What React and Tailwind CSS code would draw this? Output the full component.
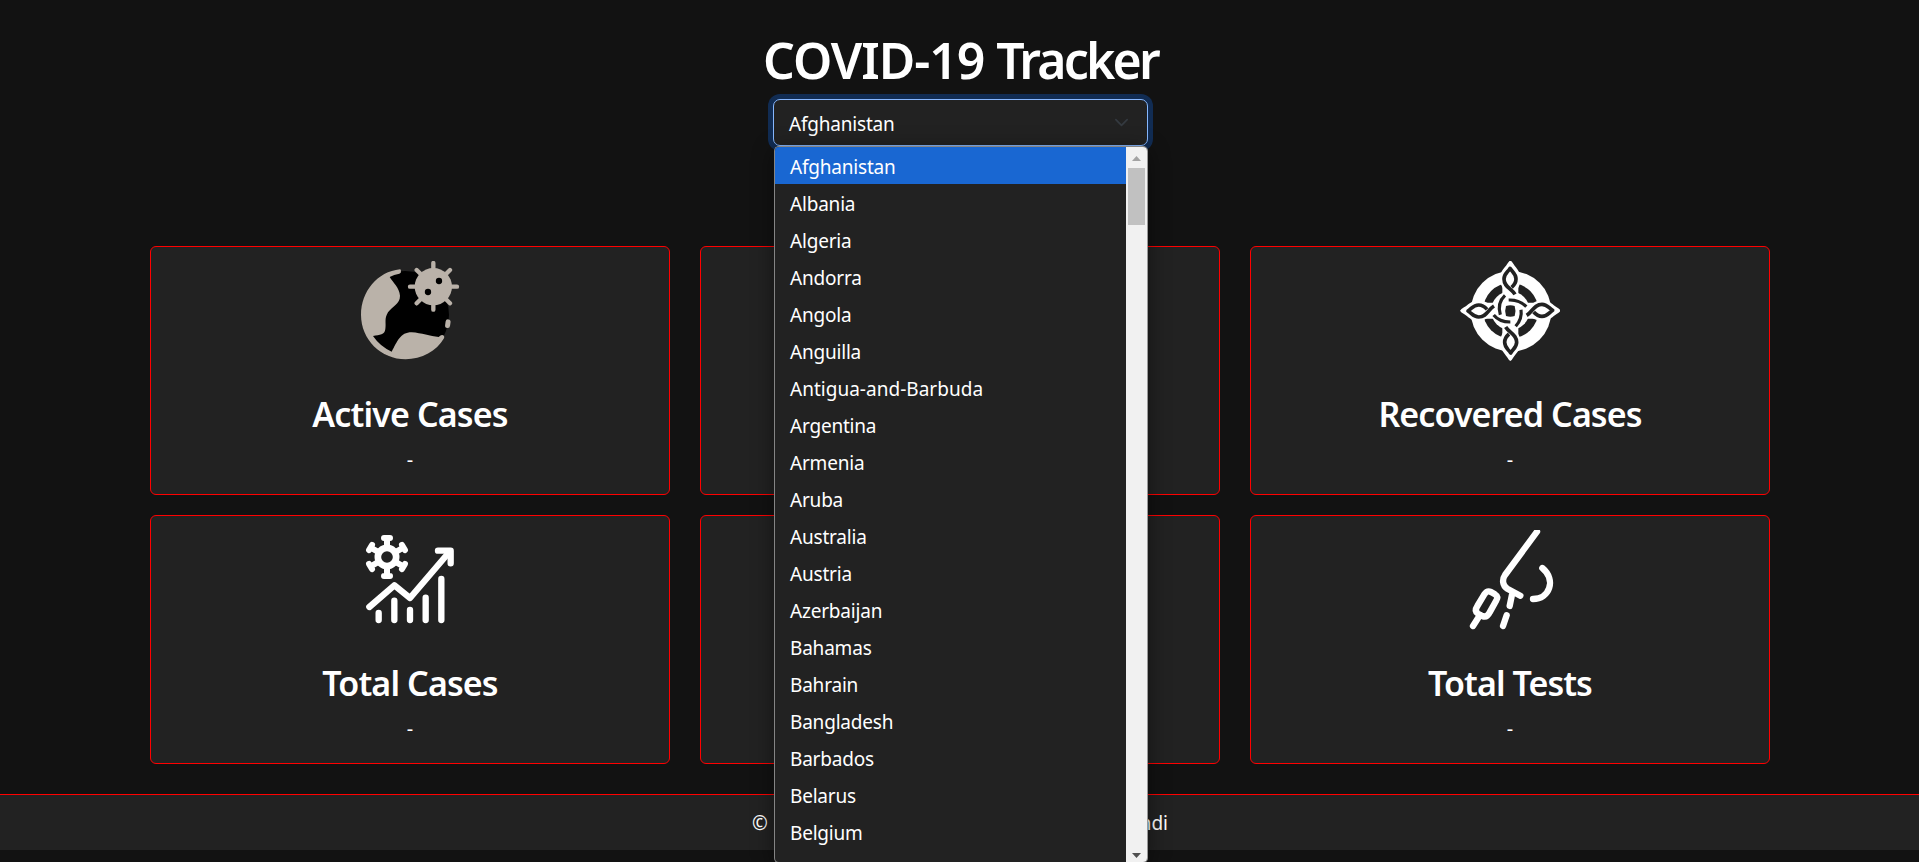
import React from "react";

const COUNTRIES = [
  "Afghanistan", "Albania", "Algeria", "Andorra", "Angola", "Anguilla",
  "Antigua-and-Barbuda", "Argentina", "Armenia", "Aruba", "Australia",
  "Austria", "Azerbaijan", "Bahamas", "Bahrain", "Bangladesh", "Barbados",
  "Belarus", "Belgium",
];

function GlobeIcon() {
  return (
    <svg className="size-[100px]" viewBox="60 48 300 300">
      <circle cx="195" cy="210" r="132" fill="#000" />
      <path fill="#bab2a9" d="M180 73 C112 80 63 140 63 210 C63 284 123 343 197 343 C245 343 290 318 312 280 Q315 271 306 270 Q302 270 296 276 C270 274 245 264 215 262 C180 262 172 290 155 320 Q120 304 99 273 C120 269 134 270 136 252 C139 234 132 222 144 202 C158 182 180 178 180 152 C178 128 160 114 149 96 Q162 88 178 86 Q184 84 183 77 Q182 73 180 73Z" />
      <rect x="316" y="223" width="15" height="26" rx="7.500" fill="#bab2a9" transform="rotate(8 323 236)" />
      <g stroke="#bab2a9" strokeWidth="13" strokeLinecap="round">
        <path d="M280 54V194M210 125H351M230 75L330 175M330 75L230 175" />
      </g>
      <circle cx="280" cy="125" r="56" fill="#bab2a9" />
      <circle cx="297" cy="108" r="9.500" fill="#000" />
      <circle cx="264" cy="141" r="9.500" fill="#000" />
    </svg>
  );
}

function KnotIcon() {
  return (
    <svg className="size-[100px]" viewBox="60 48 300 300">
      <circle cx="213" cy="199" r="121" fill="#fff" />
      <circle cx="212" cy="197" r="83" fill="#222" />
      <circle cx="211" cy="197" r="58" fill="#fff" />
      <path d="M211 100V294M114 197H308" stroke="#fff" strokeWidth="48" />
      {[0, 90, 180, 270].map((a) => (
        <g key={a} transform={`rotate(${a} 211 197)`}>
          <path d="M211 46Q206 49 201 58C194 70 180 78 180 101C180 116 186 126 194 136L230 136C238 124 241 116 241 101C241 78 228 70 221 58Q216 49 211 46Z" fill="#fff" />
          <g fill="none" stroke="#222" strokeWidth="11" strokeLinejoin="round">
            <path d="M225 148C214 130 192 126 192 102C192 86 203 82 210 70C218 82 228 86 228 102C228 112 223 120 215 127" />
          </g>
        </g>
      ))}
      <g fill="none" stroke="#222" strokeWidth="9.500">
        <path d="M195 151C179 166 174 186 181 209" />
        <path d="M206 165C228 164 244 170 259 185" />
        <path d="M243 194C246 213 240 229 227 244" />
        <path d="M161 210C172 224 188 231 211 231" />
      </g>
      <path d="M198 183Q211 178 224 183Q229 198 224 213Q211 218 198 213Q193 198 198 183Z" fill="#222" />
    </svg>
  );
}

function ChartIcon() {
  return (
    <svg className="size-[100px]" viewBox="60 45 300 300">
      <g fill="none" stroke="#fff" strokeLinecap="round" strokeLinejoin="round" strokeWidth="19">
        <path d="M88 276L163 211L210 249L328 111" />
        <path d="M294 107H332V145" />
        <path d="M116 294V315M163 257V315M210 285V315M257 248V315M304 192V315" />
      </g>
      <circle cx="141" cy="126" r="27.500" fill="none" stroke="#fff" strokeWidth="20" />
      {[0, 60, 120, 180, 240, 300].map((a) => (
        <g key={a} transform={`rotate(${a} 141 126)`} stroke="#fff" strokeLinecap="round" strokeWidth="18">
          <path d="M141 92V69M132 69H150" />
        </g>
      ))}
    </svg>
  );
}

function NoseSwabIcon() {
  return (
    <svg className="size-[100px]" viewBox="60 45 300 300">
      <g fill="none" stroke="#fff" strokeLinecap="round" strokeLinejoin="round" strokeWidth="19">
        <path d="M291 50L195 180C186 193 187 212 202 221L241 242" />
        <path d="M216 239L209 273M200 301L189 333" />
        <path d="M307 159C350 195 328 252 279 252" />
        <path d="M133 238C140 228 146 228 153 231L165 238C173 243 173 250 168 258L149 292C143 304 136 307 127 303L114 296C105 290 106 282 112 273Z" />
        <path d="M120 300L99 333" />
      </g>
    </svg>
  );
}

function StatCard({ title, titleClass, children }) {
  return (
    <div className="flex h-[249px] w-[520px] flex-col items-center rounded-[6px] border border-[#ff0000] bg-[#222222] pt-[14px]">
      {children}
      {title && (
        <>
          <h3 className={`mt-[32px] text-[34px] leading-[42px] font-semibold whitespace-nowrap ${titleClass}`}>{title}</h3>
          <p className="mt-[10px] text-[20px] leading-[30px]">-</p>
        </>
      )}
    </div>
  );
}

function CountryMenu() {
  return (
    <div className="absolute top-[47px] left-px z-10 flex h-[717px] w-[374px] overflow-hidden rounded-[5px] border border-t-[#858585] border-r-[#999] border-b-[#858585] border-l-[#858585] bg-[#222222] shadow-[0_4px_22px_rgba(0,0,0,0.45)]">
      <ul className="flex-1">
        {COUNTRIES.map((name, i) => (
          <li
            key={name}
            className={`h-[37px] pl-[15px] text-[19px] leading-[40px] ${name.includes("-") ? "tracking-[0.02px]" : "tracking-[-0.2px]"} ${i === 0 ? "bg-[#1967d2]" : ""}`}
          >
            {name}
          </li>
        ))}
      </ul>
      <div className="flex w-[21px] flex-col items-center bg-[#f1f1f1]">
        <svg className="h-[21px] w-[21px]" viewBox="0 0 21 21">
          <path d="M6 14L10.500 9L15 14Z" fill="#a3a3a3" />
        </svg>
        <div className="h-[57px] w-[17px] bg-[#c1c1c1]" />
        <svg className="mt-auto h-[21px] w-[21px]" viewBox="0 0 21 21">
          <path d="M6 12L10.500 17L15 12Z" fill="#505050" />
        </svg>
      </div>
    </div>
  );
}

export default function App() {
  return (
    <div className="flex h-[862px] w-full flex-col overflow-hidden bg-[#121212] font-['Noto_Sans',sans-serif] text-white">
      <header className="flex h-[246px] flex-col items-center pt-[30px] pl-[2px]">
        <h1 className="h-[69px] text-[50px] leading-[61px] font-semibold tracking-[-1.05px] whitespace-nowrap">
          COVID-19 <span className="tracking-[-2.8px]">Tracker</span>
        </h1>
        <div className="relative h-[48px] w-[375px]">
          <div className="flex h-[47px] items-center justify-between rounded-[7px] border border-[#86b7fe] bg-[#222222] pr-[18px] pl-[15px] shadow-[0_0_0_5px_rgba(13,110,253,0.28)]">
            <span className="pt-[3px] text-[19px] tracking-[-0.2px]">Afghanistan</span>
            <svg className="h-[15px] w-[15px]" viewBox="0 0 16 16" fill="none">
              <path d="M2 5l6 6 6-6" stroke="#343a40" strokeWidth="1.800" strokeLinecap="round" strokeLinejoin="round" />
            </svg>
          </div>
          <CountryMenu />
        </div>
      </header>
      <main className="grid grid-cols-[520px_520px_520px] justify-center gap-x-[30px] gap-y-[20px] pl-px">
        <StatCard title="Active Cases" titleClass="tracking-[-0.85px]"><GlobeIcon /></StatCard>
        <StatCard />
        <StatCard title="Recovered Cases" titleClass="tracking-[-0.9px]"><KnotIcon /></StatCard>
        <StatCard title="Total Cases" titleClass="tracking-[-0.87px]"><ChartIcon /></StatCard>
        <StatCard />
        <StatCard title="Total Tests" titleClass="tracking-[-0.95px]"><NoseSwabIcon /></StatCard>
      </main>
      <footer className="mt-[30px] flex h-[56px] items-center justify-center border-t border-[#ff0000] bg-[#222222] pt-[2px]">
        <div className="flex w-[417px] justify-between pl-px text-[19px]">
          <span>©</span>
          <span>ndi</span>
        </div>
      </footer>
    </div>
  );
}
